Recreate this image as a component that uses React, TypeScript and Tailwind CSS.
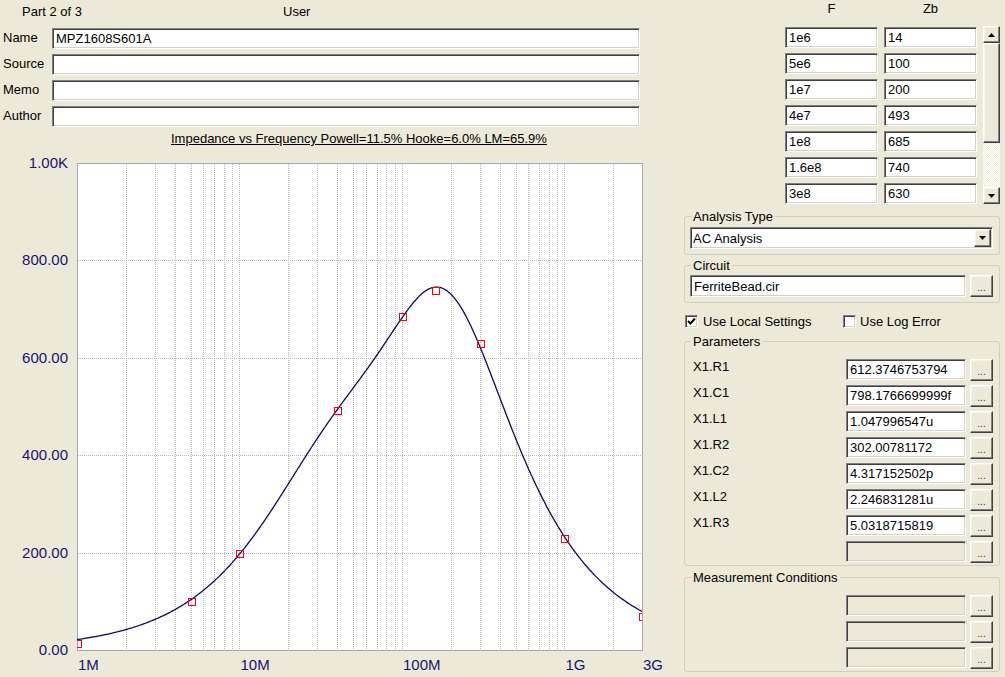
import React from 'react';

const sunken =
  'border border-t-[#808080] border-l-[#808080] border-b-white border-r-white shadow-[inset_1px_1px_0_#404040,inset_-1px_-1px_0_#d4d0c8]';
const raised =
  'border border-t-white border-l-white border-b-[#404040] border-r-[#404040] shadow-[inset_-1px_-1px_0_#808080,inset_1px_1px_0_#f5f4ea] bg-[#ece9d8]';

// ferrite bead model: R3 + (R1||L1||C1) + (R2||L2||C2)
const P = { R1: 612.3746753794, C1: 798.1766699999e-15, L1: 1.047996547e-6, R2: 302.00781172, C2: 4.317152502e-12, L2: 2.246831281e-6, R3: 5.0318715819 };

function tank(w: number, r: number, l: number, c: number) {
  const g = 1 / r;
  const b = w * c - 1 / (w * l);
  const m = g * g + b * b;
  return [g / m, -b / m];
}

function impedance(f: number) {
  const w = 2 * Math.PI * f;
  const [a1, b1] = tank(w, P.R1, P.L1, P.C1);
  const [a2, b2] = tank(w, P.R2, P.L2, P.C2);
  const re = P.R3 + a1 + a2;
  const im = b1 + b2;
  return Math.sqrt(re * re + im * im);
}

const PL = 77;
const PR = 642;
const PT = 16;
const PB = 503;
const DEC = Math.log10(3000);
const xOf = (f: number) => PL + ((PR - PL) * Math.log10(f / 1e6)) / DEC;
const yOf = (z: number) => PB - ((PB - PT) * z) / 1000;

const measured: [number, number][] = [
  [1e6, 14], [5e6, 100], [1e7, 200], [4e7, 493], [1e8, 685], [1.6e8, 740], [3e8, 630], [1e9, 230], [3e9, 70],
];

function Chart() {
  const vLines: number[] = [];
  [1e6, 1e7, 1e8, 1e9].forEach((d) => {
    for (let m = 1; m <= 9; m++) {
      const f = m * d;
      if (f > 1e6 && f < 3e9) vLines.push(xOf(f));
    }
  });
  const pts: string[] = [];
  for (let px = PL; px <= PR; px += 1) {
    const f = 1e6 * Math.pow(10, ((px - PL) / (PR - PL)) * DEC);
    pts.push(`${px},${yOf(impedance(f)).toFixed(1)}`);
  }
  const axisText = { fontFamily: "'Liberation Sans', Arial, sans-serif", fontSize: 15, fill: '#16166e' };
  return (
    <svg width={680} height={530} className="block">
      <defs>
        <clipPath id="plot">
          <rect x={PL} y={PT} width={PR - PL} height={PB - PT} />
        </clipPath>
      </defs>
      <rect x={PL + 0.5} y={PT + 0.5} width={PR - PL} height={PB - PT} fill="#ffffff" stroke="#a8a8a8" />
      {vLines.map((x, i) => (
        <line key={i} x1={Math.round(x) + 0.5} x2={Math.round(x) + 0.5} y1={PT + 1} y2={PB} stroke="#b8b8b8" strokeDasharray="1 1" />
      ))}
      {[200, 400, 600, 800].map((v) => (
        <line key={v} x1={PL + 1} x2={PR} y1={Math.round(yOf(v)) + 0.5} y2={Math.round(yOf(v)) + 0.5} stroke="#b8b8b8" strokeDasharray="1 1" />
      ))}
      <g clipPath="url(#plot)">
        <polyline points={pts.join(' ')} fill="none" stroke="#0a0a64" strokeWidth={1.3} />
        {measured.map(([f, z], i) => (
          <rect key={i} x={Math.round(xOf(f)) - 3 + 0.5} y={Math.round(yOf(z)) - 3 + 0.5} width={7} height={7} fill="none" stroke="#ff0000" />
        ))}
      </g>
      {[
        [1000, '1.00K'], [800, '800.00'], [600, '600.00'], [400, '400.00'], [200, '200.00'], [0, '0.00'],
      ].map(([v, t]) => (
        <text key={t as string} x={68} y={yOf(v as number) + 5} textAnchor="end" {...axisText}>
          {t}
        </text>
      ))}
      {[
        [1e6, '1M'], [1e7, '10M'], [1e8, '100M'], [1e9, '1G'], [3e9, '3G'],
      ].map(([f, t]) => (
        <text key={t as string} x={xOf(f as number) + 1} y={PB + 20} {...axisText}>
          {t}
        </text>
      ))}
    </svg>
  );
}

function TextBox({ value = '', disabled = false, className = '' }: { value?: string; disabled?: boolean; className?: string }) {
  return (
    <div className={`${sunken} ${disabled ? 'bg-[#ece9d8]' : 'bg-white'} flex items-center pl-[3px] whitespace-nowrap overflow-hidden ${className}`}>
      {value}
    </div>
  );
}

function DotsButton() {
  return (
    <div className={`${raised} w-[23px] h-[22px] flex items-end justify-center pb-[3px] text-[10px] leading-none text-[#333]`}>
      ...
    </div>
  );
}

function Arrow({ up }: { up?: boolean }) {
  return (
    <svg width={7} height={4} viewBox="0 0 7 4">
      <polygon points={up ? '3.5,0 7,4 0,4' : '0,0 7,0 3.5,4'} fill="#000" />
    </svg>
  );
}

function CheckBox({ checked }: { checked?: boolean }) {
  return (
    <div className={`${sunken} w-[13px] h-[13px] bg-white flex items-center justify-center`}>
      {checked && (
        <svg width={9} height={9} viewBox="0 0 9 9">
          <polyline points="1,4 3.5,6.5 8,1.5" fill="none" stroke="#000" strokeWidth={2} />
        </svg>
      )}
    </div>
  );
}

function Group({ title, className = '', children }: { title: string; className?: string; children: React.ReactNode }) {
  return (
    <fieldset className={`border border-[#d0d0bf] rounded-[3px] pl-[5px] pr-[6px] ${className}`}>
      <legend className="px-[2px] ml-[1px] leading-[15px]">{title}</legend>
      {children}
    </fieldset>
  );
}

const fields = [
  ['Name', 'MPZ1608S601A'],
  ['Source', ''],
  ['Memo', ''],
  ['Author', ''],
];

const table = [
  ['1e6', '14'], ['5e6', '100'], ['1e7', '200'], ['4e7', '493'], ['1e8', '685'], ['1.6e8', '740'], ['3e8', '630'],
];

const params = [
  ['X1.R1', '612.3746753794'],
  ['X1.C1', '798.1766699999f'],
  ['X1.L1', '1.047996547u'],
  ['X1.R2', '302.00781172'],
  ['X1.C2', '4.317152502p'],
  ['X1.L2', '2.246831281u'],
  ['X1.R3', '5.0318715819'],
  ['', ''],
];

export default function App() {
  return (
    <div className="w-[1005px] h-[677px] overflow-hidden bg-[#ece9d8] text-black text-[13px] leading-[15px] font-['Liberation_Sans',Arial,sans-serif] flex">
      {/* left side */}
      <div className="w-[684px] flex flex-col">
        <div className="h-[22px] flex items-center">
          <span className="pl-[22px] w-[283px]">Part 2 of 3</span>
          <span>User</span>
        </div>
        <div className="flex flex-col gap-[5px] mt-[6px]">
          {fields.map(([label, value]) => (
            <div key={label} className="flex items-center h-[21px]">
              <span className="w-[52px] pl-[3px] -mt-[2px]">{label}</span>
              <TextBox value={value} className="w-[588px] h-full" />
            </div>
          ))}
        </div>
        <div className="mt-[4px] h-[16px] pl-[171px]">
          <span className="underline">Impedance vs Frequency Powell=11.5% Hooke=6.0% LM=65.9%</span>
        </div>
        <Chart />
      </div>

      {/* right side */}
      <div className="w-[316px] flex flex-col">
        <div className="h-[26px] flex pt-[1px] pl-[101px]">
          <span className="w-[93px] text-center">F</span>
          <span className="w-[6px]" />
          <span className="w-[93px] text-center">Zb</span>
        </div>
        <div className="flex h-[178px] pl-[101px]">
          <div className="flex flex-col gap-[5px] pt-[1px]">
            {table.map(([f, z]) => (
              <div key={f} className="flex gap-[6px] h-[21px]">
                <TextBox value={f} className="w-[93px] h-full" />
                <TextBox value={z} className="w-[93px] h-full" />
              </div>
            ))}
          </div>
          <div className="ml-[6px] w-[17px] flex flex-col">
            <div className={`${raised} h-[17px] flex items-center justify-center`}>
              <Arrow up />
            </div>
            <div className={`${raised} h-[100px]`} />
            <div className="flex-1 bg-[repeating-conic-gradient(#ffffff_0_25%,#ece9d8_0_50%)] bg-[length:2px_2px]" />
            <div className={`${raised} h-[17px] flex items-center justify-center`}>
              <Arrow />
            </div>
          </div>
        </div>

        <Group title="Analysis Type" className="mt-[5px] pb-[5px]">
          <div className={`${sunken} bg-white h-[22px] mt-[3px] flex items-center justify-between pl-[2px] pr-[1px]`}>
            <span>AC Analysis</span>
            <div className={`${raised} w-[17px] h-[18px] flex items-center justify-center`}>
              <Arrow />
            </div>
          </div>
        </Group>

        <Group title="Circuit" className="mt-[3px] pb-[5px]">
          <div className="flex gap-[4px] mt-[2px]">
            <TextBox value="FerriteBead.cir" className="w-[276px] h-[22px] pl-[2px]" />
            <DotsButton />
          </div>
        </Group>

        <div className="mt-[10px] h-[16px] flex items-center pl-[1px]">
          <CheckBox checked />
          <span className="ml-[5px] w-[140px]">Use Local Settings</span>
          <CheckBox />
          <span className="ml-[4px]">Use Log Error</span>
        </div>

        <Group title="Parameters" className="mt-[5px] pb-[2px]">
          <div className="flex flex-col gap-[4px] mt-[10px]">
            {params.map(([label, value], i) => (
              <div key={i} className="flex h-[22px]">
                <span className="w-[156px] pl-[3px]">{label}</span>
                <TextBox value={value} disabled={!label} className="w-[120px] h-[21px]" />
                <div className="ml-[4px]">
                  <DotsButton />
                </div>
              </div>
            ))}
          </div>
        </Group>

        <Group title="Measurement Conditions" className="mt-[4px] pb-[2px]">
          <div className="flex flex-col gap-[4px] mt-[10px]">
            {[0, 1, 2].map((i) => (
              <div key={i} className="flex h-[22px] pl-[156px]">
                <TextBox disabled className="w-[120px] h-[21px]" />
                <div className="ml-[4px]">
                  <DotsButton />
                </div>
              </div>
            ))}
          </div>
        </Group>
      </div>
    </div>
  );
}
